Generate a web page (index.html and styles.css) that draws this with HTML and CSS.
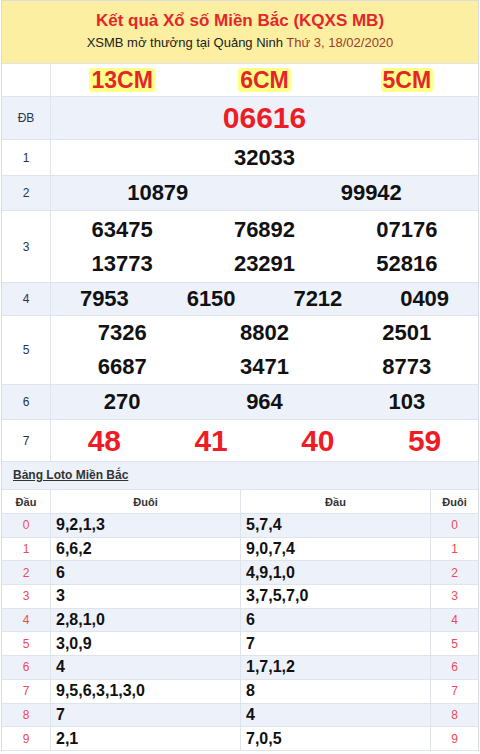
FILE: index.html
```html
<!DOCTYPE html>
<html lang="vi">
<head>
<meta charset="utf-8">
<title>KQXS MB</title>
<link rel="stylesheet" href="styles.css">
</head>
<body>
<div class="box">
  <div class="head">
    <h1 class="title">Kết quả Xổ số Miền Bắc (KQXS MB)</h1>
    <p class="sub">XSMB mở thưởng tại Quảng Ninh <span class="date">Thứ 3, 18/02/2020</span></p>
  </div>

  <div class="row r-cm">
    <div class="lbl"></div>
    <div class="vals c3"><span class="cm">13CM</span><span class="cm">6CM</span><span class="cm">5CM</span></div>
  </div>
  <div class="row alt r-db">
    <div class="lbl">ĐB</div>
    <div class="vals c1"><span class="db">06616</span></div>
  </div>
  <div class="row r-1">
    <div class="lbl">1</div>
    <div class="vals c1"><span class="n">32033</span></div>
  </div>
  <div class="row alt r-2">
    <div class="lbl">2</div>
    <div class="vals c2"><span class="n">10879</span><span class="n">99942</span></div>
  </div>
  <div class="row r-3">
    <div class="lbl">3</div>
    <div class="vals c3 two"><span class="n">63475</span><span class="n">76892</span><span class="n">07176</span><span class="n">13773</span><span class="n">23291</span><span class="n">52816</span></div>
  </div>
  <div class="row alt r-4">
    <div class="lbl">4</div>
    <div class="vals c4"><span class="n">7953</span><span class="n">6150</span><span class="n">7212</span><span class="n">0409</span></div>
  </div>
  <div class="row r-5">
    <div class="lbl">5</div>
    <div class="vals c3 two"><span class="n">7326</span><span class="n">8802</span><span class="n">2501</span><span class="n">6687</span><span class="n">3471</span><span class="n">8773</span></div>
  </div>
  <div class="row alt r-6">
    <div class="lbl">6</div>
    <div class="vals c3"><span class="n">270</span><span class="n">964</span><span class="n">103</span></div>
  </div>
  <div class="row r-7">
    <div class="lbl">7</div>
    <div class="vals c4"><span class="db">48</span><span class="db">41</span><span class="db">40</span><span class="db">59</span></div>
  </div>

  <div class="loto-title"><span>Bảng Loto Miền Bắc</span></div>
  <div class="loto">
    <div class="lr lh"><div class="k">Đầu</div><div class="c">Đuôi</div><div class="c">Đầu</div><div class="k">Đuôi</div></div>
    <div class="lr alt"><div class="k red">0</div><div class="v">9,2,1,3</div><div class="v">5,7,4</div><div class="k red">0</div></div>
    <div class="lr"><div class="k red">1</div><div class="v">6,6,2</div><div class="v">9,0,7,4</div><div class="k red">1</div></div>
    <div class="lr alt"><div class="k red">2</div><div class="v">6</div><div class="v">4,9,1,0</div><div class="k red">2</div></div>
    <div class="lr"><div class="k red">3</div><div class="v">3</div><div class="v">3,7,5,7,0</div><div class="k red">3</div></div>
    <div class="lr alt"><div class="k red">4</div><div class="v">2,8,1,0</div><div class="v">6</div><div class="k red">4</div></div>
    <div class="lr"><div class="k red">5</div><div class="v">3,0,9</div><div class="v">7</div><div class="k red">5</div></div>
    <div class="lr alt"><div class="k red">6</div><div class="v">4</div><div class="v">1,7,1,2</div><div class="k red">6</div></div>
    <div class="lr"><div class="k red">7</div><div class="v">9,5,6,3,1,3,0</div><div class="v">8</div><div class="k red">7</div></div>
    <div class="lr alt"><div class="k red">8</div><div class="v">7</div><div class="v">4</div><div class="k red">8</div></div>
    <div class="lr"><div class="k red">9</div><div class="v">2,1</div><div class="v">7,0,5</div><div class="k red">9</div></div>
  </div>
</div>
</body>
</html>
```

FILE: styles.css
```css
* { box-sizing: border-box; }
html, body { margin: 0; padding: 0; background: #fff; }
body { font-family: "Liberation Sans", Arial, sans-serif; color: #111; }

.box {
  width: 478px;
  margin-left: 1px;
  border: 1px solid #d9dde3;
  border-bottom: 0;
}

.head {
  background: #fcefa1;
  height: 63px;
  padding-top: 9px;
  text-align: center;
  border-bottom: 1px solid #dfe3ea;
}
.title {
  margin: 0;
  font-size: 17px;
  line-height: 22px;
  font-weight: bold;
  color: #e3262c;
}
.sub {
  margin: 3px 0 0;
  font-size: 13px;
  line-height: 16px;
  color: #222;
}
.date { color: #9a3b2b; }

.row {
  display: grid;
  grid-template-columns: 49px 1fr;
  border-bottom: 1px solid #dfe3ea;
}
.alt { background: #edf2fa; }
.lbl {
  border-right: 1px solid #dfe3ea;
  display: flex;
  align-items: center;
  justify-content: center;
  font-size: 12px;
  color: #263352;
}
.vals {
  display: grid;
  align-items: center;
  justify-items: center;
}
.c1 { grid-template-columns: 1fr; }
.c2 { grid-template-columns: 1fr 1fr; }
.c3 { grid-template-columns: 1fr 1fr 1fr; }
.c4 { grid-template-columns: 1fr 1fr 1fr 1fr; }
.two { align-content: center; row-gap: 8px; }

.r-cm { height: 33px; }
.r-db { height: 43px; }
.r-1 { height: 36px; }
.r-2 { height: 35px; }
.r-3 { height: 72px; }
.r-4 { height: 33px; }
.r-5 { height: 69px; }
.r-6 { height: 35px; }
.r-7 { height: 42px; }

.cm {
  background: #ffff88;
  border-radius: 3px;
  padding: 0 2px;
  font-size: 23px;
  line-height: 24px;
  font-weight: bold;
  color: #e3262c;
}
.n {
  font-size: 22px;
  line-height: 26px;
  font-weight: bold;
  color: #111;
}
.db {
  font-size: 30px;
  line-height: 34px;
  font-weight: bold;
  color: #ee1d25;
}

.loto-title {
  background: #edf2fa;
  height: 28px;
  padding: 6px 0 0 11px;
  border-bottom: 1px solid #dfe3ea;
  font-size: 12px;
  font-weight: bold;
  color: #333;
}
.loto-title span { text-decoration: underline; }

.lr {
  display: grid;
  grid-template-columns: 49px 190px 190px 1fr;
  height: 23.7px;
  border-bottom: 1px solid #dfe3ea;
}
.lr.lh { height: 24px; background: #fff; }
.lr > div {
  display: flex;
  align-items: center;
  border-right: 1px solid #dfe3ea;
}
.lr > div:last-child { border-right: 0; }
.lr .k, .lr .c {
  justify-content: center;
  font-size: 11px;
}
.lh .k, .lh .c { font-weight: bold; color: #333; }
.lr .red { color: #ee4a55; font-size: 12px; }
.lr .v {
  padding-left: 5px;
  font-size: 16px;
  font-weight: bold;
  color: #111;
}
```
